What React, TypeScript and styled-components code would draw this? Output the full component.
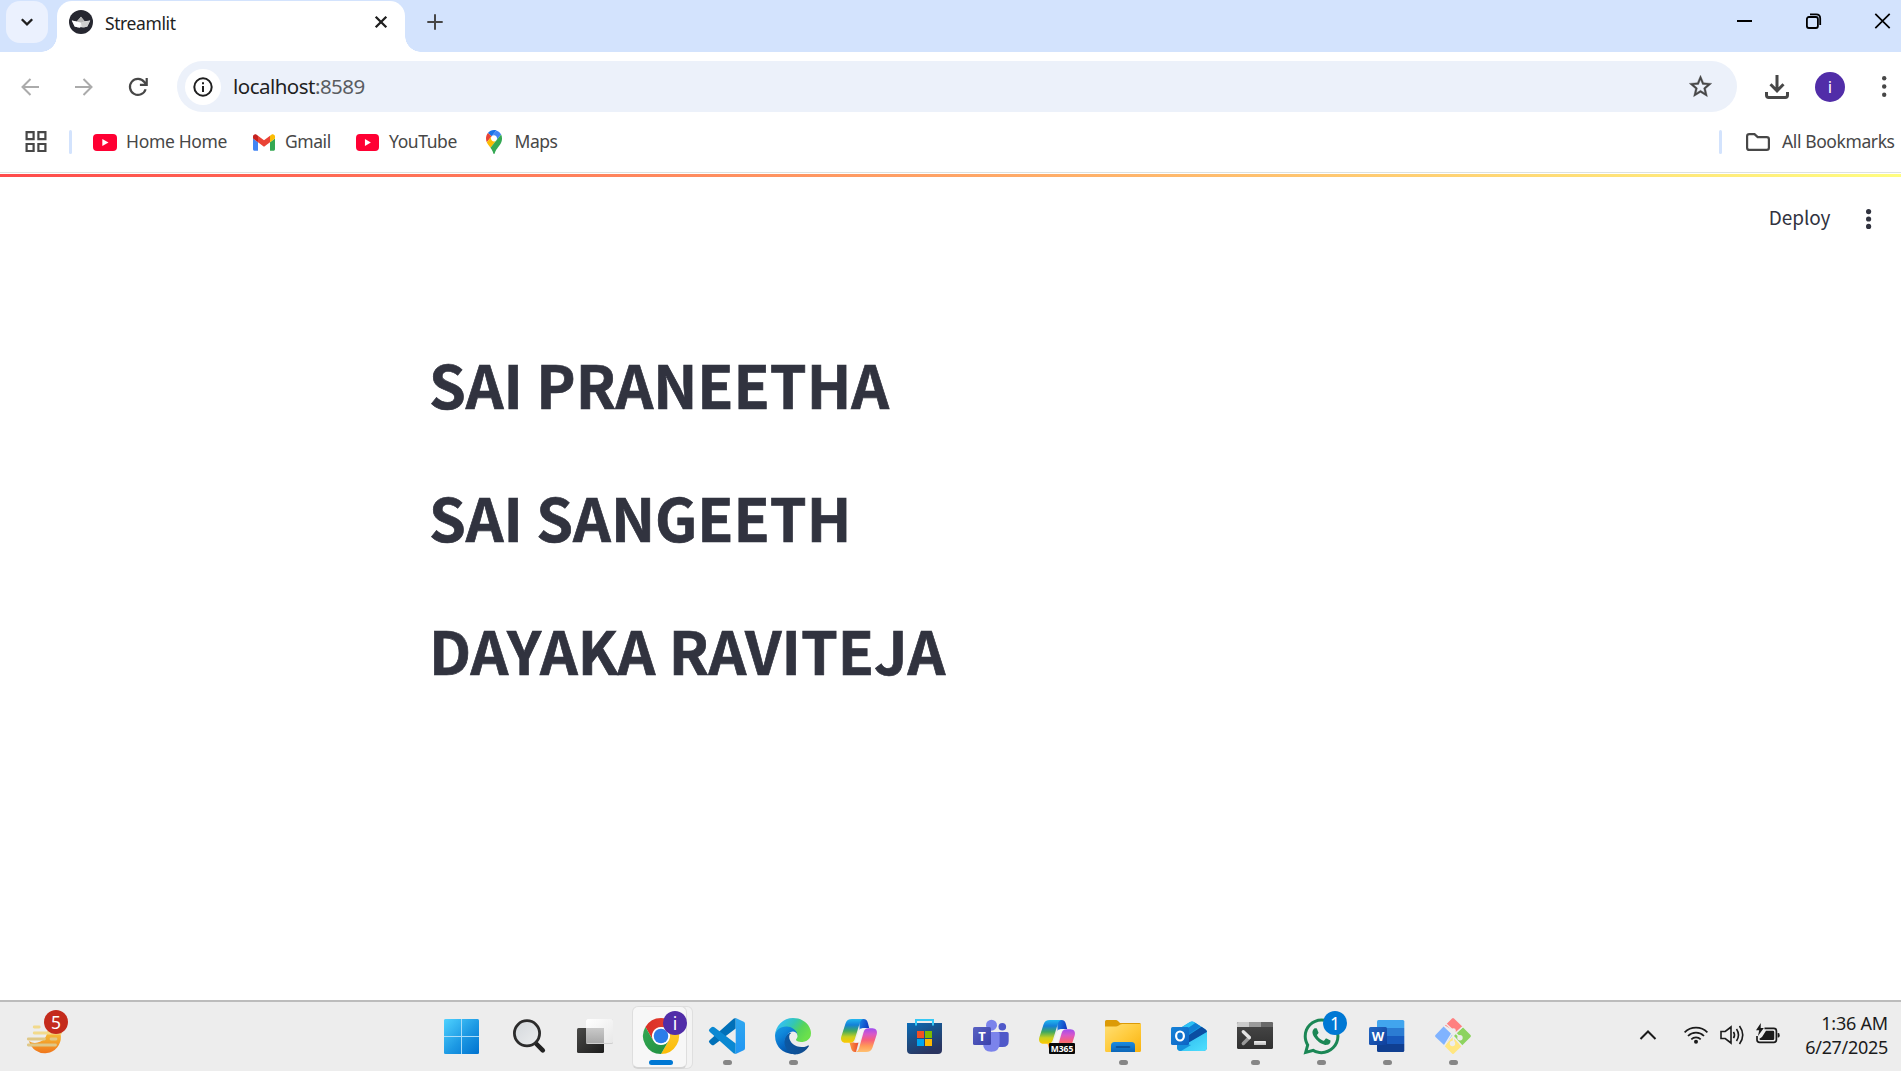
import React from "react";
import styled, { createGlobalStyle } from "styled-components";
import { FaWhatsapp } from "react-icons/fa";

const GlobalStyle = createGlobalStyle`
  * { box-sizing: border-box; }
  html, body { margin: 0; padding: 0; background: #fff; }
  body { font-family: "Noto Sans", "Open Sans", sans-serif; overflow: hidden; }
  svg { display: block; overflow: visible; flex: none; }
`;

const Desktop = styled.div`
  width: 1901px;
  height: 1071px;
  display: flex;
  flex-direction: column;
  background: #fff;
`;

/* ---------- tab strip ---------- */

const TabStrip = styled.header`
  flex: none;
  height: 52px;
  display: flex;
  align-items: flex-start;
  background: #d3e3fd;
`;

const TabSearch = styled.button`
  width: 42px;
  height: 42px;
  margin: 1px 9px 0 6px;
  padding: 0;
  border: 0;
  border-radius: 14px;
  background: #ebf1fe;
  display: grid;
  place-items: center;
`;

const Tab = styled.div`
  position: relative;
  width: 348px;
  height: 51px;
  margin-top: 1px;
  padding: 0 18px 9px 12px;
  display: flex;
  align-items: center;
  background: #fff;
  border-radius: 15px 15px 0 0;
  &::before,
  &::after {
    content: "";
    position: absolute;
    bottom: 0;
    width: 16px;
    height: 16px;
  }
  &::before {
    left: -16px;
    background: radial-gradient(circle at 0 0, transparent 15.5px, #fff 16px);
  }
  &::after {
    right: -16px;
    background: radial-gradient(circle at 100% 0, transparent 15.5px, #fff 16px);
  }
`;

const Text = styled.span<{ size: number; track?: number; color?: string }>`
  font-size: ${(p) => p.size}px;
  letter-spacing: ${(p) => p.track ?? 0}px;
  color: ${(p) => p.color ?? "#474747"};
  line-height: 24px;
  white-space: nowrap;
`;

const TabTitle = styled(Text)`
  flex: 1;
  margin: 2px 0 0 12px;
`;

const NewTab = styled.div`
  margin: 14px 0 0 22px;
`;

const WindowControls = styled.div`
  margin: 13px 11px 0 auto;
  display: flex;
  align-items: center;
  gap: 54px;
`;

/* ---------- toolbar ---------- */

const Toolbar = styled.div`
  flex: none;
  height: 68px;
  padding: 9px 13px 0 21px;
  display: flex;
  background: #fff;
`;

const NavButtons = styled.div`
  height: 51px;
  width: 156px;
  display: flex;
  align-items: center;
  gap: 35.5px;
`;

const Omnibox = styled.div`
  width: 1560px;
  height: 51px;
  padding: 0 23px 0 8px;
  display: flex;
  align-items: center;
  border-radius: 26px;
  background: #ecf1fa;
`;

const SiteInfo = styled.div`
  width: 36px;
  height: 36px;
  border-radius: 50%;
  background: #fff;
  display: grid;
  place-items: center;
`;

const Url = styled(Text)`
  flex: 1;
  margin: -2px 0 0 12px;
  b { font-weight: 400; color: #1f1f1f; }
`;

const ToolbarActions = styled.div`
  flex: 1;
  height: 51px;
  display: flex;
  align-items: center;
  padding-left: 28px;
`;

const Avatar = styled.div`
  width: 30px;
  height: 30px;
  margin: 0 37px 0 26px;
  border-radius: 50%;
  background: #512da8;
  color: #fff;
  font-size: 17px;
  line-height: 29px;
  text-align: center;
`;

/* ---------- bookmarks ---------- */

const BookmarkBar = styled.nav`
  flex: none;
  height: 53px;
  padding: 10px 6px 0 25px;
  display: flex;
  align-items: flex-start;
  border-bottom: 1px solid #dce2e0;
`;

const Divider = styled.i<{ left?: number }>`
  width: 3px;
  height: 24px;
  margin-left: ${(p) => p.left ?? 0}px;
  border-radius: 2px;
  background: #d3e3fd;
`;

const Bookmark = styled.a<{ left: number; width: number; icon: number; pad: number }>`
  height: 24px;
  margin-left: ${(p) => p.left}px;
  width: ${(p) => p.width}px;
  display: flex;
  align-items: center;
  svg { width: ${(p) => p.icon}px; margin-right: ${(p) => p.pad}px; }
  span { margin-top: -2px; }
`;

const Spacer = styled.div`
  flex: 1;
`;

/* ---------- page ---------- */

const Decoration = styled.div`
  flex: none;
  height: 3px;
  margin-top: 1px;
  background: linear-gradient(90deg, #ff4b4b, #fffd80);
`;

const AppHeader = styled.div`
  flex: none;
  height: 83px;
  padding: 0 29.5px 0 0;
  display: flex;
  align-items: center;
  justify-content: flex-end;
  gap: 36px;
`;

const Deploy = styled.span`
  margin-top: -3px;
  font-family: "Noto Sans CJK SC", sans-serif;
  font-size: 19px;
  line-height: 24px;
  letter-spacing: -0.1px;
  color: #31333f;
`;

const Main = styled.main`
  flex: 1;
  padding: 57px 0 0 429px;
`;

const Heading = styled.h1`
  margin: 0;
  height: 133px;
  line-height: 133px;
  font-family: "Noto Sans CJK SC", sans-serif;
  font-weight: 700;
  font-size: 59px;
  letter-spacing: -0.04px;
  color: #31333f;
  -webkit-text-stroke: 0.7px #31333f;
  white-space: nowrap;
`;

/* ---------- taskbar ---------- */

const Taskbar = styled.footer`
  flex: none;
  height: 71px;
  border-top: 2px solid #bcbcbc;
  background: #ededed;
  display: flex;
`;

const Widgets = styled.div`
  width: 430px;
  padding: 16px 0 0 26px;
`;

const AppSlot = styled.div<{ $active?: boolean; $bleed?: boolean }>`
  position: relative;
  width: 66px;
  height: 69px;
  padding: 16px 0 0 15px;
  &::before {
    content: "";
    display: ${(p) => (p.$active ? "block" : "none")};
    position: absolute;
    left: 4px;
    top: 4px;
    width: 53px;
    height: 60px;
    border: 1px solid #dedede;
    border-bottom: 2px solid #d4d4d4;
    border-radius: 6px;
    background: #f7f7f7;
    box-shadow: 6px 0 0 -1px #f3f3f3, 6px 0 0 0 #dfdfdf;
  }
  svg {
    position: relative;
    margin: ${(p) => (p.$bleed ? "-2.5px" : "0")};
  }
`;

const Running = styled.i<{ $wide?: boolean }>`
  position: absolute;
  left: ${(p) => (p.$wide ? 21 : 29)}px;
  top: 58px;
  width: ${(p) => (p.$wide ? 24 : 9)}px;
  height: 5px;
  border-radius: 3px;
  background: ${(p) => (p.$wide ? "#0078d4" : "#868686")};
`;

const Badge = styled.span<{ tone: string; left: number; top: number }>`
  position: absolute;
  left: ${(p) => p.left}px;
  top: ${(p) => p.top}px;
  width: 24px;
  height: 24px;
  border-radius: 50%;
  background: ${(p) => p.tone};
  color: #fff;
  font-size: 17.5px;
  line-height: 24px;
  text-align: center;
`;

const WidgetButton = styled.div`
  position: relative;
  width: 38px;
`;

const Tray = styled.div`
  flex: 1;
  padding: 5px 13px 0 0;
  display: flex;
  align-items: center;
  justify-content: flex-end;
  height: 60px;
`;

const TrayIcons = styled.div`
  display: flex;
  align-items: center;
  gap: 12px;
  margin: 0 26px 0 28px;
`;

const Clock = styled.div`
  width: 82px;
  margin-top: 1px;
  display: flex;
  flex-direction: column;
  align-items: flex-end;
`;

/* ---------- drawings ---------- */

const Dots = ({ h, r, color }: { h: number; r: number; color: string }) => (
  <svg width={r * 2} height={h} viewBox={`0 0 ${r * 2} ${h}`} fill={color}>
    <circle cx={r} cy={r} r={r} />
    <circle cx={r} cy={h / 2} r={r} />
    <circle cx={r} cy={h - r} r={r} />
  </svg>
);

const StreamlitIcon = () => (
  <svg width="24" height="24" viewBox="0 0 24 24">
    <circle cx="12" cy="12" r="12" fill="#262730" />
    <path d="M2.800 10.500l5 1L12 6.700l3.600 4.600 5.600-.800-2.900 6q-6.300 1.700-12.600 0z" fill="#e2e2e2" />
    <path d="M12 6.700l3.600 4.600-3.600 1.400-4.200-1.200z" fill="#b4b4b4" />
    <path d="M2.800 10.500L12 12.700l-1 5q-2.800-.2-5.300-1.200z" fill="#fff" />
    <path d="M21.200 10.500L12 12.700l1.500 4.900q2.500-.3 4.800-1.100z" fill="#cfcfcf" />
  </svg>
);

const YouTubeIcon = () => (
  <svg height="17" viewBox="0 0 24 17" preserveAspectRatio="none">
    <rect width="24" height="17" rx="4" fill="#ff0033" />
    <path d="M9.300 4.900v7.200l6.200-3.600z" fill="#fff" />
  </svg>
);

const GmailIcon = () => (
  <svg height="17" viewBox="52 42 88 66">
    <path fill="#4285f4" d="M58 108h14V74L52 59v43c0 3.320 2.690 6 6 6" />
    <path fill="#34a853" d="M120 108h14c3.320 0 6-2.690 6-6V59l-20 15" />
    <path fill="#fbbc04" d="M120 48v26l20-15v-8c0-7.420-8.470-11.650-14.400-7.200" />
    <path fill="#ea4335" d="M72 74V48l24 18 24-18v26L96 92" />
    <path fill="#c5221f" d="M52 51v8l20 15V48l-5.600-4.200c-5.940-4.450-14.400-.220-14.400 7.200" />
  </svg>
);

const MapsIcon = () => (
  <svg height="24" viewBox="0 0 92.3 132.3" preserveAspectRatio="none">
    <path fill="#1a73e8" d="M60.2 2.2C55.8.8 51 0 46.1 0 32 0 19.3 6.4 10.8 16.5l21.8 18.3L60.2 2.2z" />
    <path fill="#ea4335" d="M10.8 16.5C4.1 24.5 0 34.9 0 46.1c0 8.7 1.7 15.7 4.6 22l28-33.3-21.8-18.3z" />
    <path fill="#4285f4" d="M46.2 28.5c9.8 0 17.7 7.9 17.7 17.7 0 4.3-1.6 8.3-4.2 11.4 0 0 13.9-16.6 27.5-32.7-5.6-10.8-15.3-19-27-22.7L32.6 34.8c3.3-3.8 8.1-6.3 13.6-6.3" />
    <path fill="#fbbc04" d="M46.2 63.8c-9.8 0-17.7-7.9-17.7-17.7 0-4.3 1.5-8.3 4.1-11.3l-28 33.3c4.8 10.6 12.8 19.2 21 29.9l34.1-40.5c-3.3 3.9-8.1 6.3-13.5 6.3" />
    <path fill="#34a853" d="M59.1 109.2c15.4-24.1 33.3-35 33.3-63 0-7.7-1.9-14.9-5.2-21.3L25.6 98c2.6 3.4 5.3 7.3 7.9 11.3 9.4 14.5 6.8 23.1 12.8 23.1s3.4-8.7 12.8-23.2" />
  </svg>
);

const Icon36 = ({ children }: { children: React.ReactNode }) => (
  <svg width="36" height="36" viewBox="0 0 36 36">{children}</svg>
);

const Grad = ({ id, stops, x2 = 1, y2 = 1 }: { id: string; stops: string[]; x2?: number; y2?: number }) => (
  <linearGradient id={id} x1="0" y1="0" x2={x2} y2={y2}>
    {stops.map((c, i) => (
      <stop key={i} offset={i / (stops.length - 1)} stopColor={c} />
    ))}
  </linearGradient>
);

const WindowsIcon = () => (
  <Icon36>
    <defs>
      <linearGradient id="win" gradientUnits="userSpaceOnUse" x1="-1" y1="1" x2="34" y2="36">
        <stop offset="0" stopColor="#4fd2ff" />
        <stop offset=".55" stopColor="#1c98e3" />
        <stop offset="1" stopColor="#0072cf" />
      </linearGradient>
    </defs>
    <rect x="-1" y="1" width="35" height="35" rx="1.5" fill="#a9dcf8" />
    <g fill="url(#win)">
      <path d="M.5 1H16v17H-1V2.500A1.500 1.500 0 0 1 .5 1z" />
      <path d="M17 1h15.500a1.500 1.500 0 0 1 1.500 1.500V18H17z" />
      <path d="M-1 19h17v17H.5A1.500 1.500 0 0 1-1 34.500z" />
      <path d="M17 19h17v15.500a1.500 1.500 0 0 1-1.500 1.500H17z" />
    </g>
  </Icon36>
);

const SearchIcon = () => (
  <Icon36>
    <defs><Grad id="lens" stops={["#d4d8dc", "#eceeef"]} /></defs>
    <path d="M25.500 26l6.300 6.400" stroke="#222" strokeWidth="4.600" strokeLinecap="round" />
    <circle cx="16" cy="15.300" r="12.600" fill="url(#lens)" stroke="#2c2c2c" strokeWidth="2.800" />
  </Icon36>
);

const TaskViewIcon = () => (
  <Icon36>
    <defs>
      <Grad id="tvd" stops={["#4a4a48", "#1c1c1c"]} />
      <Grad id="tvl" stops={["#ffffff", "#e8e8e8"]} />
      <Grad id="tvo" stops={["#c9c9c9", "#a9a9a9"]} x2={0} />
    </defs>
    <rect y="10" width="27" height="25" rx="1.500" fill="url(#tvd)" />
    <rect x="9" y="1" width="27" height="25" rx="1.500" fill="#cfcfcf" />
    <rect x="9" y="1" width="27" height="24" rx="1.500" fill="url(#tvl)" />
    <rect x="9" y="10" width="18" height="15" fill="url(#tvo)" />
  </Icon36>
);

const ChromeIcon = () => (
  <svg width="36" height="36" viewBox="0 0 48 48">
    <defs>
      <Grad id="chr" stops={["#d93025", "#ea4335"]} y2={0} />
      <Grad id="chy" stops={["#fcc934", "#fbbc04"]} x2={0} />
      <Grad id="chg" stops={["#34a853", "#1e8e3e"]} />
    </defs>
    <circle cx="24" cy="24" r="12" fill="#fff" />
    <path fill="url(#chr)" d="M24,12H44.7812a23.9939,23.9939,0,0,0-41.5639.0029L13.6079,30l.0093-.0024A11.9852,11.9852,0,0,1,24,12Z" />
    <path fill="url(#chy)" d="M34.3913,30.0029,24.0007,48A23.994,23.994,0,0,0,44.78,12.0031H23.9989l-.0025.0093A11.985,11.985,0,0,1,34.3913,30.0029Z" />
    <path fill="url(#chg)" d="M13.6086,30.0031,3.218,12.006A23.994,23.994,0,0,0,24.0025,48L34.3931,30.0029l-.0067-.0068a11.9852,11.9852,0,0,1-20.7778.007Z" />
    <circle cx="24" cy="24" r="9.700" fill="#2b7de9" />
  </svg>
);

const CodeIcon = () => (
  <Icon36>
    <defs>
      <Grad id="vsa" stops={["#2fa8f0", "#2196f3"]} x2={0} />
    </defs>
    <path d="M26.700 0v10.500L5.300 26.700a2.200 2.200 0 0 1-2.800 0L.600 25a1.800 1.800 0 0 1 0-2.700L24.500.800z" fill="#0070b8" />
    <path d="M26.700 36V25.500L5.300 9.300a2.200 2.200 0 0 0-2.800 0L.600 11a1.800 1.800 0 0 0 0 2.700L24.500 35.200z" fill="#0a88d2" />
    <path d="M26.700 0l8 3.800q1.300.600 1.300 2v24.400q0 1.400-1.300 2l-8 3.800z" fill="url(#vsa)" />
  </Icon36>
);

const EdgeIcon = () => (
  <svg width="36" height="36" viewBox="0 0 256 256">
    <defs>
      <Grad id="ea" stops={["#0c59a4", "#114a8b"]} y2={0} />
      <Grad id="eb" stops={["#1b9de2", "#1089dc", "#0669c4", "#064c98"]} x2={0.6} />
      <Grad id="ec" stops={["#2fb4e4", "#35c1e8", "#33c6b4", "#55d45a", "#6be04c"]} y2={0.5} />
    </defs>
    <path fill="url(#ea)" d="M235.700 195.500a93.700 93.700 0 0 1-10.600 4.700 101.900 101.900 0 0 1-35.900 6.400c-47.300 0-88.500-32.500-88.500-74.300a31.500 31.500 0 0 1 16.400-27.300c-42.800 1.800-53.800 46.400-53.800 72.500 0 74 68.100 81.400 82.800 81.400 7.900 0 19.800-2.300 27-4.600l1.300-.400a128.300 128.300 0 0 0 66.600-52.800 4 4 0 0 0-5.300-5.600Z" />
    <path fill="url(#eb)" d="M105.700 241.400a79.200 79.200 0 0 1-22.700-21.300 80.700 80.700 0 0 1 29.500-120c3.200-1.500 8.500-4.100 15.600-4a32.400 32.400 0 0 1 25.700 13 31.900 31.900 0 0 1 6.300 18.700c0-.200 24.500-79.600-80-79.600-43.900 0-80 41.600-80 78.200a130.200 130.200 0 0 0 12.100 56 128 128 0 0 0 156.400 67 75.500 75.500 0 0 1-62.800-8Z" />
    <path fill="url(#ec)" d="M152.300 148.900c-.900 1-3.300 2.500-3.300 5.700 0 2.600 1.700 5.100 4.700 7.200 14.400 10 41.500 8.700 41.600 8.700 10.700 0 21.100-2.900 30.300-8.300a61.400 61.400 0 0 0 30.400-52.900c.300-22.400-8-37.300-11.300-43.900C223.500 23.900 177.700 0 128 0A128 128 0 0 0 0 126.200c.500-36.500 36.800-66 80-66 3.500 0 23.500.300 42 10.100 16.300 8.600 24.900 18.900 30.800 29.200 6.200 10.700 7.300 24.100 7.300 29.500 0 5.300-2.700 13.300-7.800 19.900Z" />
  </svg>
);

const CopilotShapes = () => (
  <>
    <defs>
      <Grad id="cpa" stops={["#22b8f0", "#1480d8", "#3fa860", "#c8d020", "#ffc800"]} x2={0} />
      <Grad id="cpb" stops={["#a04df0", "#d858c8", "#f8607a", "#ff9a58", "#ffc070"]} x2={0} />
      <Grad id="cpc" stops={["#1a8be8", "#1238c0"]} y2={0.4} />
      <Grad id="cpd" stops={["#ff9a40", "#e84830"]} y2={0} />
    </defs>
    <path d="M18 1h4.500c2.500 0 3.700 1.500 4.400 4l1.300 5h-4.500c-3 0-4 1.500-4.900 4.500z" fill="url(#cpc)" />
    <path d="M8.500 24.500h9L15 34h-1c-2.200 0-3.200-1.500-3.800-3.500z" fill="url(#cpd)" />
    <path d="M11 1h11.500c-2.300.3-3.100 2-3.800 4.300L14 20.500c-.9 3-2.300 4.300-5 4.300H4.500C1 24.800-.7 22 .3 18.500l4.200-13C5.500 2.300 7.500 1 11 1z" fill="url(#cpa)" />
    <path d="M25 34H14.500c2-.3 3-2 3.700-4.300L22.500 14.500c.9-3 2.300-4.300 5-4.300h4c3.500 0 5.200 2.800 4.200 6.300l-4.200 13C30.500 32.700 28.500 34 25 34z" fill="url(#cpb)" />
    <path d="M18 12.500q.8-2.300 3.200-2.300H24q-1.300 1.300-2 3.600l-2.700 8.700q-.8 2.300-3.200 2.300H13q1.300-1.200 2-3.400z" fill="#f6f6f6" />
  </>
);

const CopilotIcon = () => <Icon36><CopilotShapes /></Icon36>;

const CopilotM365Icon = () => (
  <Icon36>
    <g transform="translate(0 1)"><CopilotShapes /></g>
    <rect x="10" y="25" width="26" height="11" rx="1" fill="#080808" />
    <text x="23" y="33.600" textAnchor="middle" textLength="22.500" fill="#fff" fontFamily="Noto Sans, sans-serif" fontWeight="700" fontSize="8.500">M365</text>
  </Icon36>
);

const StoreIcon = () => (
  <Icon36>
    <defs><Grad id="st" stops={["#0a6cb8", "#1b4f86", "#2a3560"]} x2={0.5} /></defs>
    <path d="M0 5h35v27q0 4-4 4H4q-4 0-4-4z" fill="url(#st)" />
    <path d="M9 7.500V2h17v5.500" fill="none" stroke="#35c8f5" strokeWidth="2" />
    <path d="M10 13h7v7h-7z" fill="#f25022" />
    <path d="M18 13h7v7h-7z" fill="#7fba00" />
    <path d="M10 21h7v7h-7z" fill="#00a4ef" />
    <path d="M18 21h7v7h-7z" fill="#ffb900" />
  </Icon36>
);

const TeamsIcon = () => (
  <Icon36>
    <defs><Grad id="tm" stops={["#5a62c3", "#3940ab"]} /></defs>
    <circle cx="29.300" cy="8.700" r="3.800" fill="#5059c9" />
    <path d="M24 14h10q1.700 0 1.700 1.700V23q0 6-6 6H26z" fill="#5059c9" />
    <circle cx="18.500" cy="7.200" r="5.500" fill="#7b83eb" />
    <path d="M10 14h15q1.600 0 1.600 1.600V25q0 8.700-8.300 8.700T10 25z" fill="#7b83eb" />
    <rect y="9" width="18" height="18" rx="1.500" fill="url(#tm)" />
    <text x="9" y="22.500" textAnchor="middle" fill="#fff" fontFamily="Noto Sans, sans-serif" fontWeight="700" fontSize="13">T</text>
  </Icon36>
);

const FolderAppIcon = () => (
  <Icon36>
    <defs>
      <Grad id="fo" stops={["#ffdf75", "#ffcb3d", "#f9b20e"]} />
      <Grad id="fb" stops={["#1a8be0", "#0c66b8"]} x2={0} />
    </defs>
    <path d="M0 3.500Q0 2 1.500 2H11q1 0 2 1l2 2h19.500q1.500 0 1.500 1.500V15H0z" fill="#dc9a06" />
    <path d="M0 8.500h11q1.300 0 2.300-.8l2-1.200Q16 6 17.300 6H36v26.500q0 1.500-1.500 1.500h-33Q0 34 0 32.500z" fill="url(#fo)" />
    <path d="M6 34v-6.500Q6 24 9.500 24h17q3.500 0 3.500 3.500V34z" fill="url(#fb)" />
    <path d="M11.500 29h13" stroke="#0a4a8c" strokeWidth="1.600" strokeLinecap="round" />
  </Icon36>
);

const OutlookIcon = () => (
  <Icon36>
    <defs>
      <Grad id="ou" stops={["#1683d8", "#0d63c4"]} />
      <Grad id="ov" stops={["#28b4ea", "#4fe0ff"]} />
    </defs>
    <path d="M6 12L19 4q2-1.200 4 0l11.300 7.200Q36 12.400 36 14v15q0 4-4 4H10q-4 0-4-4z" fill="#1a9de0" />
    <path d="M8 11L19 4q2-1.200 4 0l1.500 1L9 16z" fill="#2cc0f4" />
    <path d="M9 15.500L24.500 5l5 3.200L14 19z" fill="#1180d4" />
    <path d="M14 19.500L30.500 8.700l4 2.700q1.500 1 1.500 2.600L18 25z" fill="#0a4ea2" />
    <path d="M36 14v15q0 4-4 4H10q-2.500 0-3.500-2z" fill="url(#ov)" />
    <path d="M6 24l14 3-10 6q-4 0-4-4z" fill="#1590dc" />
    <rect y="9" width="18" height="18" rx="1.500" fill="url(#ou)" />
    <ellipse cx="9" cy="18" rx="3.900" ry="4.500" fill="none" stroke="#fff" strokeWidth="2.200" />
  </Icon36>
);

const TerminalIcon = () => (
  <Icon36>
    <defs>
      <Grad id="te" stops={["#484848", "#303030"]} x2={0} />
      <Grad id="tf" stops={["#f0f0f0", "#bdbdbd"]} x2={0} />
    </defs>
    <rect y="4" width="36" height="27" rx="1.500" fill="url(#te)" />
    <path d="M0 9V5.500Q0 4 1.500 4H12v5z" fill="#cbcbcb" />
    <path d="M12 4h12v5H12z" fill="#9b9b9b" />
    <path d="M24 4h10.500Q36 4 36 5.500V9H24z" fill="#696969" />
    <path d="M12.300 19.500l-6 6" stroke="#9a9a9a" strokeWidth="3.400" strokeLinecap="round" />
    <path d="M6.300 13.700l6 5.800" stroke="#e4e4e4" strokeWidth="3.400" strokeLinecap="round" />
    <rect x="17" y="23" width="12" height="4" rx=".6" fill="url(#tf)" />
  </Icon36>
);

const WordIcon = () => (
  <Icon36>
    <defs><Grad id="wd" stops={["#2368c4", "#0f3f9c"]} /></defs>
    <path d="M8 10V3.500Q8 2 9.500 2h24.300q1.500 0 1.500 1.500V10z" fill="#41a5ee" />
    <path d="M8 10h27.300v8H8z" fill="#2b7cd3" />
    <path d="M8 18h27.300v8H8z" fill="#185abd" />
    <path d="M8 26h27.300v6.500q0 1.500-1.500 1.500H9.500Q8 34 8 32.500z" fill="#103f91" />
    <rect y="9" width="18" height="18" rx="1.500" fill="url(#wd)" />
    <text x="9" y="22.600" textAnchor="middle" textLength="12.500" lengthAdjust="spacingAndGlyphs" fill="#fff" fontFamily="Noto Sans, sans-serif" fontWeight="700" fontSize="12.500">W</text>
  </Icon36>
);

const GitIcon = () => (
  <Icon36>
    <path d="M17 .5q1-1 2 0l8.500 8.300-6 5.500L10 7.500z" fill="#ff8080" />
    <path d="M8.600 8.600L17.500 17 9.600 27.500.5 19q-1-1 0-2z" fill="#80b3ff" />
    <path d="M27.800 9.300L35.500 17q1 1 0 2l-8.700 8.700-8.300-9.400z" fill="#8dd35f" />
    <path d="M18 19l8.500 9.200-7.500 7.300q-1 1-2 0L9.300 27.800z" fill="#ffe680" />
    <path d="M10.500 5.500l8 7.300L25 19.500M18.500 12.800V24M18.500 12.800l-9.500 15.500M28 8.500l-9 8M19 19l8.500 9.500" fill="none" stroke="#ededed" strokeWidth="1.500" />
    <circle cx="18.500" cy="12.500" r="2.300" fill="#ededed" />
    <circle cx="17.500" cy="25.500" r="2.700" fill="#ededed" />
    <circle cx="25" cy="19.800" r="2.700" fill="#ededed" />
  </Icon36>
);

const WhatsAppIcon = () => <FaWhatsapp size={41} color="#1b8755" />;

const WeatherIcon = () => (
  <svg width="38" height="38" viewBox="0 0 38 38">
    <defs><Grad id="we" stops={["#f5c842", "#f4a52c", "#f0761c"]} x2={0} /></defs>
    <path d="M33 10.500Q35 14 34.900 18.500A16.200 16.200 0 0 1 3 23Q8 26.500 14.500 23.500T21.500 13z" fill="url(#we)" />
    <g stroke="#f2da8c" strokeWidth="2.800" strokeLinecap="round">
      <path d="M8.200 9h5M8.200 15h26.500" />
      <path d="M2.300 21H18.500M25 21h5M2.300 27H29.500" stroke="#dfc888" />
    </g>
  </svg>
);

const apps: { icon: React.ReactNode; running?: boolean; active?: boolean; bleed?: boolean; badge?: [string, string] }[] = [
  { icon: <WindowsIcon /> },
  { icon: <SearchIcon /> },
  { icon: <TaskViewIcon /> },
  { icon: <ChromeIcon />, running: true, active: true, badge: ["i", "#512da8"] },
  { icon: <CodeIcon />, running: true },
  { icon: <EdgeIcon />, running: true },
  { icon: <CopilotIcon /> },
  { icon: <StoreIcon /> },
  { icon: <TeamsIcon /> },
  { icon: <CopilotM365Icon /> },
  { icon: <FolderAppIcon />, running: true },
  { icon: <OutlookIcon /> },
  { icon: <TerminalIcon />, running: true },
  { icon: <WhatsAppIcon />, running: true, bleed: true, badge: ["1", "#0078d4"] },
  { icon: <WordIcon />, running: true },
  { icon: <GitIcon />, running: true },
];

const BrowserTabs = () => (
  <TabStrip>
    <TabSearch>
      <svg width="12" height="8" viewBox="0 0 12 8" fill="none" stroke="#1f1f1f" strokeWidth="2.300"><path d="M.8 1.200L6 6.400l5.200-5.200" /></svg>
    </TabSearch>
    <Tab>
      <StreamlitIcon />
      <TabTitle size={17.5} track={-0.4} color="#1f1f1f">Streamlit</TabTitle>
      <svg width="12" height="12" viewBox="0 0 12 12" stroke="#1f1f1f" strokeWidth="2.300"><path d="M.7.7l10.600 10.600M11.300.7L.7 11.300" /></svg>
    </Tab>
    <NewTab>
      <svg width="16" height="16" viewBox="0 0 16 16" stroke="#474747" strokeWidth="2"><path d="M8 .3v15.400M.3 8h15.400" /></svg>
    </NewTab>
    <WindowControls>
      <svg width="15" height="16" viewBox="0 0 15 16" stroke="#000" strokeWidth="2"><path d="M0 8h15" /></svg>
      <svg width="15" height="16" viewBox="0 0 15 16" fill="none" stroke="#000" strokeWidth="1.800"><rect x=".9" y="4" width="11" height="11" rx="2" /><path d="M4 1.400h6.200q4 0 4 4V12" /></svg>
      <svg width="15" height="16" viewBox="0 0 15 16" stroke="#000" strokeWidth="1.700"><path d="M.3.800l14.400 14.400M14.700.800L.3 15.200" /></svg>
    </WindowControls>
  </TabStrip>
);

export default function App() {
  return (
    <>
      <GlobalStyle />
      <Desktop>
        <BrowserTabs />
        <Toolbar>
          <NavButtons>
            <svg width="18" height="18" viewBox="0 0 18 18" fill="none" stroke="#ababab" strokeWidth="2"><path d="M18 9H1.500M9.500 1L1.500 9l8 8" /></svg>
            <svg width="18" height="18" viewBox="0 0 18 18" fill="none" stroke="#ababab" strokeWidth="2"><path d="M0 9h16.500M8.500 1l8 8-8 8" /></svg>
            <svg width="20" height="18" viewBox="0 0 20 18" fill="none" stroke="#474747" strokeWidth="2.200"><path d="M17.600 11.200A8 8 0 1 1 16.300 4L18.600 6.600M18.700 0v6.900h-6.800" /></svg>
          </NavButtons>
          <Omnibox>
            <SiteInfo>
              <svg width="20" height="20" viewBox="0 0 20 20" fill="none" stroke="#1f1f1f" strokeWidth="2"><circle cx="10" cy="10" r="8.700" /><path d="M10 9v6M10 5.200v2.100" /></svg>
            </SiteInfo>
            <Url size={20.5} track={-0.52} color="#5a5d61"><b>localhost</b>:8589</Url>
            <svg width="27" height="27" viewBox="0 0 24 24" fill="#474747"><path d="M22 9.240l-7.190-.620L12 2 9.190 8.630 2 9.240l5.460 4.730L5.820 21 12 17.270 18.180 21l-1.630-7.030L22 9.240zM12 15.400l-3.760 2.270 1-4.280-3.320-2.880 4.380-.380L12 6.100l1.710 4.040 4.380.380-3.320 2.880 1 4.280L12 15.400z" stroke="#474747" strokeWidth=".3" /></svg>
          </Omnibox>
          <ToolbarActions>
            <svg width="24" height="24" viewBox="0 0 24 24" fill="none" stroke="#474747" strokeWidth="3"><path d="M12 0v16M5.500 9.300L12 15.800l6.500-6.500M1.500 17v3.300q0 2.200 2.200 2.200h16.600q2.200 0 2.200-2.200V17" /></svg>
            <Avatar>i</Avatar>
            <Dots h={21} r={2.2} color="#474747" />
          </ToolbarActions>
        </Toolbar>
        <BookmarkBar>
          <svg width="22" height="22" viewBox="0 0 22 22" fill="none" stroke="#474747" strokeWidth="2.200">
            <path d="M1.600 2.100h7v7h-7zM13.400 2.100h7v7h-7zM1.600 14h7v7h-7zM13.400 14h7v7h-7z" />
          </svg>
          <Divider left={22} />
          <Bookmark left={21} width={134} icon={24} pad={9}><YouTubeIcon /><Text size={17.5} track={-0.33}>Home Home</Text></Bookmark>
          <Bookmark left={26} width={77} icon={22} pad={10}><GmailIcon /><Text size={17.5} track={-0.45}>Gmail</Text></Bookmark>
          <Bookmark left={26} width={101} icon={23} pad={10}><YouTubeIcon /><Text size={17.5} track={-0.4}>YouTube</Text></Bookmark>
          <Bookmark left={29} width={73} icon={16} pad={12.5}><MapsIcon /><Text size={17.5} track={-0.45}>Maps</Text></Bookmark>
          <Spacer />
          <Divider />
          <Bookmark left={24} width={149} icon={24} pad={12}>
            <svg height="18" viewBox="0 0 24 18" fill="none" stroke="#474747" strokeWidth="2.200"><path d="M1.100 14.700V3.300q0-2.200 2.200-2.200h5.200l3.200 3h9q2.200 0 2.200 2.200v8.400q0 2.200-2.200 2.200H3.300q-2.200 0-2.200-2.200z" /></svg>
            <Text size={17.5} track={-0.4}>All Bookmarks</Text>
          </Bookmark>
        </BookmarkBar>
        <Decoration />
        <AppHeader>
          <Deploy>Deploy</Deploy>
          <Dots h={20} r={2.6} color="#31333f" />
        </AppHeader>
        <Main>
          <Heading>SAI PRANEETHA</Heading>
          <Heading>SAI SANGEETH</Heading>
          <Heading>DAYAKA RAVITEJA</Heading>
        </Main>
        <Taskbar>
          <Widgets>
            <WidgetButton>
              <WeatherIcon />
              <Badge tone="#c42b1c" left={18} top={-8}>5</Badge>
            </WidgetButton>
          </Widgets>
          {apps.map((a, i) => (
            <AppSlot key={i} $active={a.active} $bleed={a.bleed}>
              {a.icon}
              {a.badge && <Badge tone={a.badge[1]} left={35} top={9}>{a.badge[0]}</Badge>}
              {a.running && <Running $wide={a.active} />}
            </AppSlot>
          ))}
          <Tray>
            <svg width="16" height="10" viewBox="0 0 16 10" fill="none" stroke="#1b1b1b" strokeWidth="2"><path d="M.5 9L8 1.500 15.500 9" /></svg>
            <TrayIcons>
              <svg width="24" height="18" viewBox="0 0 24 18" fill="none" stroke="#1b1b1b" strokeWidth="1.700">
                <path d="M.6 6.400a16.200 16.200 0 0 1 22.800 0M4 10a11.400 11.400 0 0 1 16 0M7.300 13.400a6.700 6.700 0 0 1 9.400 0" />
                <circle cx="12" cy="15.800" r="2" fill="#1b1b1b" stroke="none" />
              </svg>
              <svg width="24" height="20" viewBox="0 0 24 20" fill="none" stroke="#1b1b1b" strokeWidth="1.600">
                <path d="M1 6.500h4.200L11 2v16l-5.800-4.500H1zM13.500 6.800q2 3.200 0 6.400M16.500 4q4 6 0 12M19.500 1q6.500 9 0 18" />
              </svg>
              <svg width="24" height="20" viewBox="0 0 24 20">
                <path d="M8.500 3.400h9.300q2.600 0 2.600 2.600v8.700q0 2.600-2.600 2.600H3.600Q1 17.300 1 14.700V11" fill="none" stroke="#1b1b1b" strokeWidth="1.700" />
                <path d="M10 5.800h7q1.200 0 1.200 1.200v6.700q0 1.200-1.200 1.200H4.600q-1.200 0-1.200-1.200L6 12z" fill="#1b1b1b" />
                <path d="M21.600 8h.8q1.300 0 1.300 2.300t-1.300 2.300h-.8z" fill="#1b1b1b" />
                <path d="M4.800-2L0 5.200h3.200L2 11l5.800-8H4.700z" fill="#1b1b1b" />
              </svg>
            </TrayIcons>
            <Clock>
              <Text size={18} track={-0.2} color="#1b1b1b">1:36 AM</Text>
              <Text size={18} track={-0.3} color="#1b1b1b">6/27/2025</Text>
            </Clock>
          </Tray>
        </Taskbar>
      </Desktop>
    </>
  );
}
